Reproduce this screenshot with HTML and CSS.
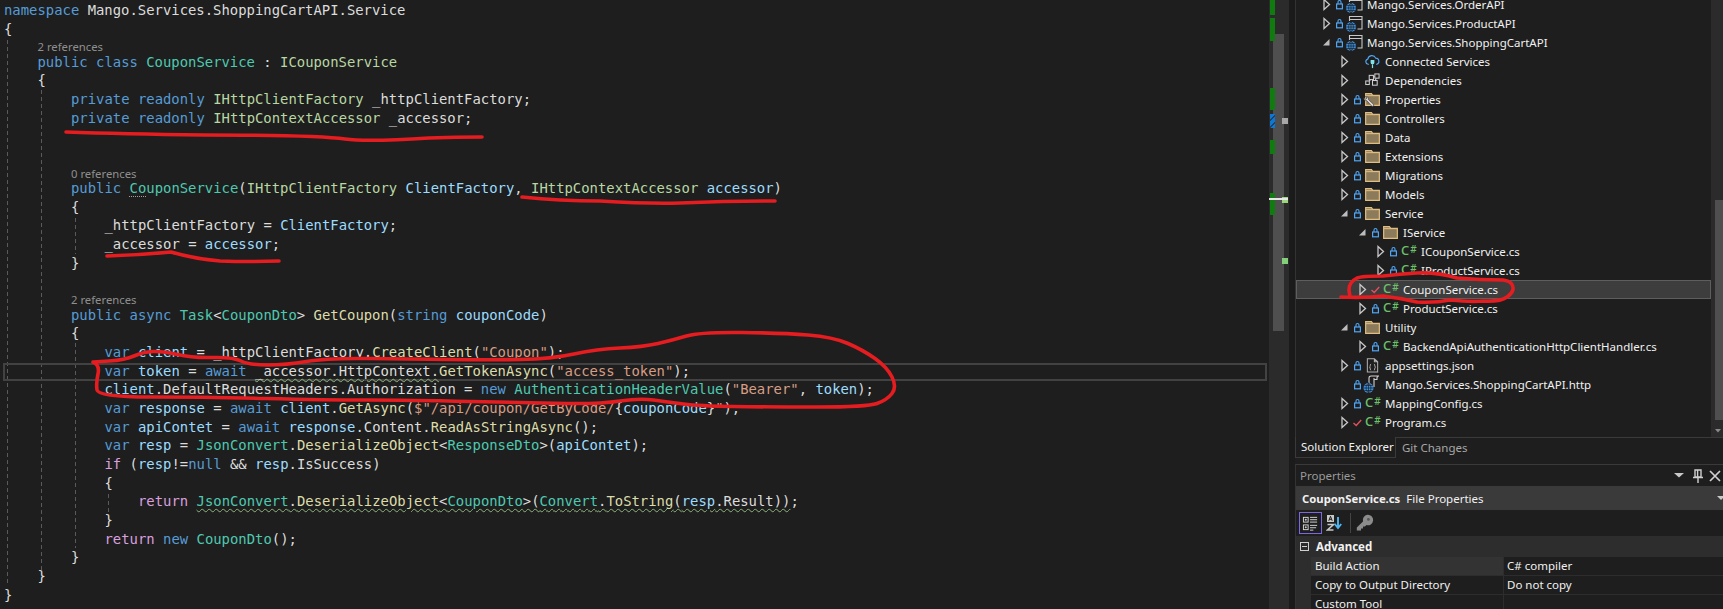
FILE: index.html
```html
<!DOCTYPE html>
<html lang="en">
<head>
<meta charset="utf-8">
<title>CouponService.cs</title>
<link rel="stylesheet" href="styles.css">
</head>
<body>
<svg class="defs" width="0" height="0" aria-hidden="true">
  <symbol id="a-c" viewBox="0 0 13 13"><path d="M4 1.5 L9.5 6.5 L4 11.5 Z" fill="none" stroke="#c8c8c8" stroke-width="1.3"/></symbol>
  <symbol id="a-e" viewBox="0 0 13 13"><path d="M9.5 3 V9.5 H3 Z" fill="#bdbdbd"/></symbol>
  <symbol id="lock" viewBox="0 0 13 13"><path d="M5 6 V4 a1.5 1.5 0 0 1 3 0 V6" fill="none" stroke="#4fa6f5" stroke-width="1.1"/><rect x="3.6" y="6" width="5.8" height="4.8" fill="none" stroke="#4fa6f5" stroke-width="1.2"/></symbol>
  <symbol id="proj" viewBox="0 0 17 17"><path d="M3.5 6 V1.5 H16 V14 H11.5 M3.5 4.5 H16" fill="none" stroke="#c8c8c8" stroke-width="1.1"/><circle cx="5" cy="12" r="5" fill="#3c8fdc"/><path d="M0 12 H10 M.8 9.5 H9.2 M.8 14.5 H9.2 M5 7 V17 M5 7 C1.8 9.5 1.8 14.5 5 17 M5 7 C8.2 9.5 8.2 14.5 5 17" fill="none" stroke="#1e1e1e" stroke-width=".7"/></symbol>
  <symbol id="folder" viewBox="0 0 14 13"><path d="M.6 12 V1 H6 L7.2 2.6 H13.4 V12 Z" fill="#8c7b5a" stroke="#e0bd80" stroke-width="1.1"/><path d="M1 2.9 H13" stroke="#e0bd80"/></symbol>
  <symbol id="wrench" viewBox="0 0 14 14"><path d="M1 1.8 C.4 4 2 5.8 4.4 5.4 L10 11.6 A1.4 1.4 0 0 0 12.2 9.6 L6.4 4.2 C6.8 1.8 5 .2 2.8 .6 L4.6 2.4 L3 4 Z" fill="#d8d8d8" stroke="#1e1e1e" stroke-width=".6"/></symbol>
  <symbol id="cloud" viewBox="0 0 16 16"><path d="M4 11 H3.4 A2.8 2.8 0 0 1 3 5.5 A4.4 4.4 0 0 1 11.4 4.4 A3.4 3.4 0 0 1 12.6 11 H12" fill="none" stroke="#4fa6f5" stroke-width="1.2"/><path d="M6 6.5 V9 A2 2 0 0 0 10 9 V6.5 Z" fill="#7fe3ea"/><path d="M8 11 V15" stroke="#7fe3ea" stroke-width="1.3"/></symbol>
  <symbol id="deps" viewBox="0 0 16 16"><g fill="none" stroke="#d0d0d0" stroke-width="1.1"><rect x=".8" y="8.5" width="3.8" height="3.8"/><rect x="4.5" y="2.5" width="4.5" height="4.5"/><rect x="10.5" y="1" width="4.5" height="4.5"/><rect x="8" y="8" width="5" height="5"/><path d="M4.5 8.5 L6 7 M9 4 H10.5 M11 8 L12 5.5"/></g></symbol>
  <symbol id="json" viewBox="0 0 16 16"><path d="M2.5 .8 H10 L13.5 4 V15 H2.5 Z M10 .8 V4 H13.5" fill="none" stroke="#b0b0b0" stroke-width="1.1"/><path d="M6.5 6.5 C5 6.5 6.2 9.5 4.8 9.7 C6.2 10 5 13 6.5 13 M9.5 6.5 C11 6.5 9.8 9.5 11.2 9.7 C9.8 10 11 13 9.5 13" fill="none" stroke="#d0d0d0" stroke-width=".9"/></symbol>
  <symbol id="http" viewBox="0 0 20 19"><path d="M6 8 V3 C6 1.6 7 1 8 1 H16 C14.6 1 14 2 14 3 V4.5 H11 M11 12 V3" fill="none" stroke="#d0d0d0" stroke-width="1.1"/><circle cx="5.5" cy="13" r="5" fill="#3c8fdc"/><path d="M.5 13 H10.5 M1.3 10.5 H9.7 M1.3 15.5 H9.7 M5.5 8 V18 M5.5 8 C2.3 10.5 2.3 15.5 5.5 18 M5.5 8 C8.7 10.5 8.7 15.5 5.5 18" fill="none" stroke="#1e1e1e" stroke-width=".7"/></symbol>
  <symbol id="check" viewBox="0 0 13 13"><path d="M2.5 7 L5.2 9.5 L10.2 4" fill="none" stroke="#e2505e" stroke-width="1.4"/></symbol>
</svg>

<main class="editor">
  <span class="guide g1"></span><span class="guide g2"></span><span class="guide g3"></span><span class="guide g4"></span><span class="guide g5"></span>
  <div class="code">
    <div class="ln"><b class="k">namespace</b> Mango.Services.ShoppingCartAPI.Service</div>
    <div class="ln">{</div>
    <div class="lens i1">2 references</div>
    <div class="ln i1"><b class="k">public class</b> <b class="t">CouponService</b> : <b class="f">ICouponService</b></div>
    <div class="ln i1">{</div>
    <div class="ln i2"><b class="k">private readonly</b> <b class="f">IHttpClientFactory</b> _httpClientFactory;</div>
    <div class="ln i2"><b class="k">private readonly</b> <b class="f">IHttpContextAccessor</b> _accessor;</div>
    <div class="ln"></div>
    <div class="ln"></div>
    <div class="lens i2">0 references</div>
    <div class="ln i2"><b class="k">public</b> <b class="t"><u class="dots">Co</u>uponService</b>(<b class="f">IHttpClientFactory</b> <b class="p">ClientFactory</b>, <b class="f">IHttpContextAccessor</b> <b class="p">accessor</b>)</div>
    <div class="ln i2">{</div>
    <div class="ln i3">_httpClientFactory = <b class="p">ClientFactory</b>;</div>
    <div class="ln i3">_accessor = <b class="p">accessor</b>;</div>
    <div class="ln i2">}</div>
    <div class="ln"></div>
    <div class="lens i2">2 references</div>
    <div class="ln i2"><b class="k">public async</b> <b class="t">Task</b>&lt;<b class="t">CouponDto</b>&gt; <b class="m">GetCoupon</b>(<b class="k">string</b> <b class="p">couponCode</b>)</div>
    <div class="ln i2">{</div>
    <div class="ln i3"><b class="k">var</b> <b class="p">client</b> = _httpClientFactory.<b class="m">CreateClient</b>(<b class="s">"Coupon"</b>);</div>
    <div class="ln i3 cur"><b class="k">var</b> <b class="p">token</b> = <b class="k">await</b> <u class="sq">_accessor.HttpContext.</u><b class="m">GetTokenAsync</b>(<b class="s">"access_token"</b>);</div>
    <div class="ln i3"><b class="p">client</b>.DefaultRequestHeaders.Authorization = <b class="k">new</b> <b class="t">AuthenticationHeaderValue</b>(<b class="s">"Bearer"</b>, <b class="p">token</b>);</div>
    <div class="ln i3"><b class="k">var</b> <b class="p">response</b> = <b class="k">await</b> <b class="p">client</b>.<b class="m">GetAsync</b>(<b class="s">$"/api/coupon/GetByCode/</b>{<b class="p">couponCode</b>}<b class="s">"</b>);</div>
    <div class="ln i3"><b class="k">var</b> <b class="p">apiContet</b> = <b class="k">await</b> <b class="p">response</b>.Content.<b class="m">ReadAsStringAsync</b>();</div>
    <div class="ln i3"><b class="k">var</b> <b class="p">resp</b> = <b class="t">JsonConvert</b>.<b class="m">DeserializeObject</b>&lt;<b class="t">ResponseDto</b>&gt;(<b class="p">apiContet</b>);</div>
    <div class="ln i3"><b class="c">if</b> (<b class="p">resp</b>!=<b class="k">null</b> &amp;&amp; <b class="p">resp</b>.IsSuccess)</div>
    <div class="ln i3">{</div>
    <div class="ln i4"><b class="c">return</b> <u class="sq"><b class="t">JsonConvert</b>.<b class="m">DeserializeObject</b>&lt;<b class="t">CouponDto</b>&gt;(<b class="t">Convert</b>.<b class="m">ToString</b>(<b class="p">resp</b>.Result))</u>;</div>
    <div class="ln i3">}</div>
    <div class="ln i3"><b class="c">return</b> <b class="k">new</b> <b class="t">CouponDto</b>();</div>
    <div class="ln i2">}</div>
    <div class="ln i1">}</div>
    <div class="ln">}</div>
  </div>
</main>

<aside class="lane">
  <div class="thumb"></div>
  <span class="mark m1"></span><span class="mark m2"></span><span class="mark m3"></span><span class="mark m4"></span><span class="mark m5"></span><span class="mark m6"></span>
  <span class="dot d1"></span><span class="dot d2"></span><span class="dot d3"></span>
  <span class="caret"></span>
</aside>
<div class="split"></div>

<section class="side">
  <div class="explorer">
    <div class="tree">
      <div class="row l0"><svg class="sl"><use href="#a-c"/></svg><svg class="sl"><use href="#lock"/></svg><svg class="ic big"><use href="#proj"/></svg><span>Mango.Services.OrderAPI</span></div>
      <div class="row l0"><svg class="sl"><use href="#a-c"/></svg><svg class="sl"><use href="#lock"/></svg><svg class="ic big"><use href="#proj"/></svg><span>Mango.Services.ProductAPI</span></div>
      <div class="row l0"><svg class="sl"><use href="#a-e"/></svg><svg class="sl"><use href="#lock"/></svg><svg class="ic big"><use href="#proj"/></svg><span>Mango.Services.ShoppingCartAPI</span></div>
      <div class="row l1"><svg class="sl"><use href="#a-c"/></svg><i></i><svg class="ic"><use href="#cloud"/></svg><span>Connected Services</span></div>
      <div class="row l1"><svg class="sl"><use href="#a-c"/></svg><i></i><svg class="ic"><use href="#deps"/></svg><span>Dependencies</span></div>
      <div class="row l1"><svg class="sl"><use href="#a-c"/></svg><svg class="sl"><use href="#lock"/></svg><div class="stack"><svg class="ic"><use href="#folder"/></svg><svg class="wr"><use href="#wrench"/></svg></div><span>Properties</span></div>
      <div class="row l1"><svg class="sl"><use href="#a-c"/></svg><svg class="sl"><use href="#lock"/></svg><svg class="ic"><use href="#folder"/></svg><span>Controllers</span></div>
      <div class="row l1"><svg class="sl"><use href="#a-c"/></svg><svg class="sl"><use href="#lock"/></svg><svg class="ic"><use href="#folder"/></svg><span>Data</span></div>
      <div class="row l1"><svg class="sl"><use href="#a-c"/></svg><svg class="sl"><use href="#lock"/></svg><svg class="ic"><use href="#folder"/></svg><span>Extensions</span></div>
      <div class="row l1"><svg class="sl"><use href="#a-c"/></svg><svg class="sl"><use href="#lock"/></svg><svg class="ic"><use href="#folder"/></svg><span>Migrations</span></div>
      <div class="row l1"><svg class="sl"><use href="#a-c"/></svg><svg class="sl"><use href="#lock"/></svg><svg class="ic"><use href="#folder"/></svg><span>Models</span></div>
      <div class="row l1"><svg class="sl"><use href="#a-e"/></svg><svg class="sl"><use href="#lock"/></svg><svg class="ic"><use href="#folder"/></svg><span>Service</span></div>
      <div class="row l2"><svg class="sl"><use href="#a-e"/></svg><svg class="sl"><use href="#lock"/></svg><svg class="ic"><use href="#folder"/></svg><span>IService</span></div>
      <div class="row l3"><svg class="sl"><use href="#a-c"/></svg><svg class="sl"><use href="#lock"/></svg><em class="cs">C<small>#</small></em><span>ICouponService.cs</span></div>
      <div class="row l3"><svg class="sl"><use href="#a-c"/></svg><svg class="sl"><use href="#lock"/></svg><em class="cs">C<small>#</small></em><span>IProductService.cs</span></div>
      <div class="row l2 sel"><svg class="sl"><use href="#a-c"/></svg><svg class="sl"><use href="#check"/></svg><em class="cs">C<small>#</small></em><span>CouponService.cs</span></div>
      <div class="row l2"><svg class="sl"><use href="#a-c"/></svg><svg class="sl"><use href="#lock"/></svg><em class="cs">C<small>#</small></em><span>ProductService.cs</span></div>
      <div class="row l1"><svg class="sl"><use href="#a-e"/></svg><svg class="sl"><use href="#lock"/></svg><svg class="ic"><use href="#folder"/></svg><span>Utility</span></div>
      <div class="row l2"><svg class="sl"><use href="#a-c"/></svg><svg class="sl"><use href="#lock"/></svg><em class="cs">C<small>#</small></em><span>BackendApiAuthenticationHttpClientHandler.cs</span></div>
      <div class="row l1"><svg class="sl"><use href="#a-c"/></svg><svg class="sl"><use href="#lock"/></svg><svg class="ic"><use href="#json"/></svg><span>appsettings.json</span></div>
      <div class="row l1"><i></i><svg class="sl"><use href="#lock"/></svg><svg class="ic big2"><use href="#http"/></svg><span>Mango.Services.ShoppingCartAPI.http</span></div>
      <div class="row l1"><svg class="sl"><use href="#a-c"/></svg><svg class="sl"><use href="#lock"/></svg><em class="cs">C<small>#</small></em><span>MappingConfig.cs</span></div>
      <div class="row l1"><svg class="sl"><use href="#a-c"/></svg><svg class="sl"><use href="#check"/></svg><em class="cs">C<small>#</small></em><span>Program.cs</span></div>
    </div>
    <div class="vbar"><div class="vthumb"></div><svg class="vdown" viewBox="0 0 8 6"><path d="M1 1 H7 L4 4.5 Z" fill="#8a8a8a"/></svg></div>
  </div>

  <div class="tabs">
    <div class="tab on">Solution Explorer</div>
    <div class="tab">Git Changes</div>
  </div>

  <div class="props">
    <div class="ptitle">
      <span class="grow">Properties</span>
      <svg class="tool" viewBox="0 0 16 16"><path d="M1 5 H11 L6 9.5 Z" fill="#c8c8c8"/></svg>
      <svg class="tool" viewBox="0 0 16 16"><path d="M5 2 H11 V9 H5 Z M7.6 2 V9 M3 9.5 H13 M8 9.5 V15" fill="none" stroke="#d0d0d0" stroke-width="1.4"/></svg>
      <svg class="tool" viewBox="0 0 16 16"><path d="M3 3 L13 13 M13 3 L3 13" stroke="#d0d0d0" stroke-width="1.7"/></svg>
    </div>
    <div class="pobj"><strong>CouponService.cs</strong><span class="grow">File Properties</span><svg class="pdrop" viewBox="0 0 8 6"><path d="M0 1 H8 L4 5 Z" fill="#c8c8c8"/></svg></div>
    <div class="pbar">
      <div class="pbtn"><svg viewBox="0 0 18 18"><g fill="none" stroke="#d8d8d8"><rect x="1.5" y="2.5" width="5" height="5"/><rect x="1.5" y="10.5" width="5" height="5"/></g><path d="M3 5 H5 M3 13 H5 M4 4 V6 M4 12 V14" stroke="#d8d8d8"/><path d="M8.5 2.5 H16 M8.5 5 H16 M8.5 7.5 H16 M8.5 11 H16 M8.5 13.5 H15 M8.5 16 H12" stroke="#d8d8d8"/></svg></div>
      <svg class="psort" viewBox="0 0 16 18"><rect x="1" y="1" width="7" height="7" fill="#c8c8c8"/><path d="M2.8 6.8 L4.5 2.3 L6.2 6.8 M3.4 5.3 H5.6" stroke="#1e1e1e" fill="none"/><path d="M1.5 10.5 H7.5 L1.5 16 H7.5" fill="none" stroke="#c8c8c8" stroke-width="1.6"/><path d="M12 3 V13 M8.8 10 L12 14 L15.2 10" fill="none" stroke="#4fb4f0" stroke-width="1.9"/></svg>
      <span class="psep"></span>
      <svg class="pkey" viewBox="0 0 18 18"><path d="M.8 13.5 L7 7.6 A5.2 5.2 0 1 1 10.4 11 L9 12.5 H7 V14.5 H5 V16.5 H.8 Z" fill="#8b8b8b"/><circle cx="12.4" cy="5.4" r="1.4" fill="#555"/></svg>
    </div>
    <div class="pcat"><span class="minus"></span><strong>Advanced</strong></div>
    <div class="pgrid">
      <div class="pname act">Build Action</div><div class="pval">C# compiler</div>
      <div class="pname">Copy to Output Directory</div><div class="pval">Do not copy</div>
      <div class="pname">Custom Tool</div><div class="pval"></div>
    </div>
  </div>
</section>

<svg class="ink" viewBox="0 0 1723 609" aria-hidden="true">
  <g fill="none" stroke="#e51c20" stroke-width="3.6" stroke-linecap="round" stroke-linejoin="round">
    <path d="M66 132 Q122 134 204 135 Q318 135 345 139 Q367 142 429 138 Q455 137 482 137"/>
    <path d="M522 197 Q560 201 600 201 Q650 204 680 203 Q730 201 775 201"/>
    <path d="M107 256 Q140 255 171 252 Q195 259 220 261 Q250 262 279 261"/>
    <path d="M93 362 L109 361 Q125 360 134 356 Q143 352 153 351.5 Q163 351 177.5 354.5 Q192 358 212.5 357.5 Q233 357 241 361 Q249 365 267.5 365 Q286 365 306.5 361.5 Q327 358 367.5 358.5 Q408 359 449 359.5 Q490 360 520.5 359.5 Q551 359 574 354 Q597 349 620 348 Q643 347 658 343.5 Q673 340 686.5 336 Q700 332 741.5 332.5 Q783 333 808 335 Q833 337 848 343.5 Q863 350 875 358.5 Q887 367 892 377 Q897 387 892 393.5 Q887 400 877 403.5 Q867 407 817 407 Q767 407 733.5 406.5 Q700 406 683.5 404 Q667 402 653.5 400 Q640 398 620 401 Q600 404 566.5 403.5 Q533 403 470.5 401.5 Q408 400 367.5 400 Q327 400 265.5 398.5 Q204 397 151 397 Q98 397 97 390 Q96 383 98 374 Q100 365 93 362"/>
    <path d="M1341 297 Q1365 298 1383 296 Q1400 298 1417 302 Q1435 303 1450 300 Q1470 302 1483 301 Q1500 302 1507 297 Q1514 292 1513 287 Q1512 281 1503 280 Q1480 280 1457 278 Q1437 272 1417 273 Q1400 274 1383 276 Q1362 276 1357 278 Q1349 282 1349 290 L1350 297"/>
  </g>
</svg>
</body>
</html>
```
FILE: styles.css
```css
* { box-sizing: border-box; }
html, body { margin: 0; height: 609px; overflow: hidden; }
body {
  display: flex;
  position: relative;
  width: 1723px;
  background: #1e1e1e;
  color: #dcdcdc;
  font-family: "Noto Sans", "Open Sans", sans-serif;
  font-size: 11.5px;
}
.defs { position: absolute; }
b, i, em, u { font: inherit; font-weight: normal; font-style: normal; text-decoration: none; }

/* Editor */
.editor { position: relative; flex: 0 0 1269px; height: 609px; overflow: hidden; background: #1e1e1e; }
.code {
  position: relative;
  isolation: isolate;
  padding: 1px 0 0 4px;
  font-family: "DejaVu Sans Mono", "Liberation Mono", monospace;
  font-size: 13.9px;
}
.ln { height: 18.7px; line-height: 18.7px; white-space: pre; }
.lens {
  height: 14.3px;
  line-height: 17px;
  color: #8f8f8f;
  font-family: "Noto Sans", sans-serif;
  font-size: 11.3px;
  white-space: pre;
}
.i1 { padding-left: 33.5px; }
.i2 { padding-left: 67px; }
.i3 { padding-left: 100.5px; }
.i4 { padding-left: 134px; }
.cur { position: relative; }
.cur::before {
  content: "";
  position: absolute;
  z-index: -1;
  left: -1px;
  right: 2px;
  top: 1px;
  bottom: -1px;
  border: 2px solid #424242;
}
.k { color: #569cd6; }
.c { color: #d8a0df; }
.t { color: #4ec9b0; }
.f { color: #b8d7a3; }
.m { color: #dcdcaa; }
.p { color: #9cdcfe; }
.s { color: #d69d85; }
.sq { text-decoration: underline wavy #8db57c 1px; text-underline-offset: 2px; }
.dots { text-decoration: underline dotted #a0a0a0 1px; text-underline-offset: 3px; }
.guide {
  position: absolute;
  width: 1px;
  background: repeating-linear-gradient(#5a5a5a 0 4px, transparent 4px 7px);
}
.g1 { left: 7px; top: 40px; height: 543px; }
.g2 { left: 41px; top: 90px; height: 481px; }
.g3 { left: 75px; top: 218px; height: 36px; }
.g4 { left: 75px; top: 343px; height: 205px; }
.g5 { left: 108px; top: 494px; height: 19px; }

/* Overview lane */
.lane { position: relative; flex: 0 0 20px; background: #2b2b2b; }
.thumb { position: absolute; left: 4px; top: 34px; width: 11px; height: 297px; background: #4f4f4f; }
.mark { position: absolute; left: 1px; width: 5px; background: #107c10; }
.m1 { top: 0; height: 15px; }
.m2 { top: 18px; height: 23px; }
.m3 { top: 88px; height: 22px; }
.m4 { top: 114px; height: 14px; background: repeating-linear-gradient(135deg, #0a78d4 0 4px, #24405c 4px 5px); }
.m5 { top: 140px; height: 14px; }
.m6 { top: 193px; height: 22px; }
.dot { position: absolute; left: 13px; width: 6px; height: 6px; }
.d1 { top: 118px; background: #a8a8a8; }
.d2 { top: 197px; background: #9cd67f; }
.d3 { top: 258px; background: #84d07a; }
.caret { position: absolute; left: 0; top: 198px; width: 19px; height: 2px; background: #e6e6e6; }
.split { flex: 0 0 6px; background: #1b1b1b; }

/* Side panels */
.side { flex: 1; display: flex; flex-direction: column; min-width: 0; }
.explorer { display: flex; flex: 0 0 437px; border-left: 1px solid #333; overflow: hidden; }
.tree { flex: 1; margin-top: -5.5px; min-width: 0; }
.row {
  display: grid;
  grid-template-columns: 13px 13px 21px 1fr;
  align-items: center;
  height: 19px;
  color: #f1f1f1;
  white-space: nowrap;
}
.row > svg.sl { width: 13px; height: 13px; }
.l0 { padding-left: 24px; }
.l1 { padding-left: 42px; }
.l2 { padding-left: 60px; }
.l3 { padding-left: 78px; }
.sel { background: #3d3d3d; outline: 1px solid #5e5e5e; outline-offset: -1px; }
.ic { width: 15px; height: 15px; margin-left: 1px; }
.big { width: 17px; height: 17px; margin-left: 0; }
.big2 { width: 20px; height: 19px; margin-left: -1px; }
.stack { position: relative; height: 15px; }
.wr { position: absolute; left: -1px; top: 4px; width: 12px; height: 12px; }
.cs { color: #6cc16c; font-size: 13px; font-weight: 500; margin-left: 1px; line-height: 15px; }
.cs small { font-size: 10px; margin-left: 1px; position: relative; top: -2px; }
.vbar { position: relative; flex: 0 0 12px; background: #2b2b2b; }
.vthumb { position: absolute; right: 0; top: 200px; width: 8px; height: 220px; background: #4f4f4f; }
.vdown { position: absolute; right: 1px; bottom: 3px; width: 8px; height: 6px; }

.tabs { display: flex; flex: 0 0 21px; border-top: 1px solid #3a3a3a; white-space: nowrap; }
.tab { padding: 0 7px 0 6px; line-height: 19px; color: #a8a8a8; }
.tab.on {
  width: 101px;
  margin-top: -1px;
  padding-left: 5px;
  border: 1px solid #3a3a3a;
  border-top: 0;
  background: #1e1e1e;
  color: #f1f1f1;
  line-height: 20px;
}
.props { flex: 1; margin-top: 6px; border-top: 1px solid #3a3a3a; border-left: 1px solid #333; min-height: 0; }
.grow { flex: 1; }
.ptitle { display: flex; align-items: center; height: 21px; padding-left: 4px; color: #9a9a9a; gap: 1px; }
.tool { width: 16px; height: 16px; }
.pobj { display: flex; align-items: center; height: 24px; padding-left: 6px; background: #3a3a3a; color: #f1f1f1; gap: 6px; }
.pobj strong { font-weight: 700; font-size: 11.3px; }
.pdrop { width: 8px; height: 6px; margin-right: -2px; }
.pbar { display: flex; align-items: center; height: 26px; padding-left: 3px; }
.pbtn { display: flex; align-items: center; justify-content: center; width: 23px; height: 22px; border: 1px solid #7a68e0; }
.pbtn svg { width: 17px; height: 17px; }
.psort { width: 16px; height: 18px; margin-left: 4px; }
.psep { width: 1px; height: 20px; margin-left: 8px; background: #444; }
.pkey { width: 18px; height: 18px; margin-left: 5px; }
.pcat { display: flex; align-items: center; height: 21px; padding-left: 4px; background: #2d2d2d; gap: 7px; color: #f1f1f1; }
.pcat strong { font-weight: 700; }
.minus { position: relative; width: 9px; height: 9px; border: 1px solid #d0d0d0; }
.minus::after { content: ""; position: absolute; left: 1px; top: 3px; width: 5px; height: 1px; background: #d0d0d0; }
.pgrid { display: grid; grid-template-columns: 193px 1fr; grid-auto-rows: 19px; margin-left: 15px; box-shadow: -15px 0 0 #2d2d2d; }
.pname, .pval { line-height: 18px; border-bottom: 1px solid #2d2d2d; color: #f1f1f1; }
.pname { padding-left: 4px; border-right: 1px solid #2d2d2d; }
.pval { padding-left: 3px; }
.act { background: #333; }

/* Hand-drawn annotation over the whole screenshot */
.ink { position: absolute; left: 0; top: 0; width: 1723px; height: 609px; pointer-events: none; }
```
